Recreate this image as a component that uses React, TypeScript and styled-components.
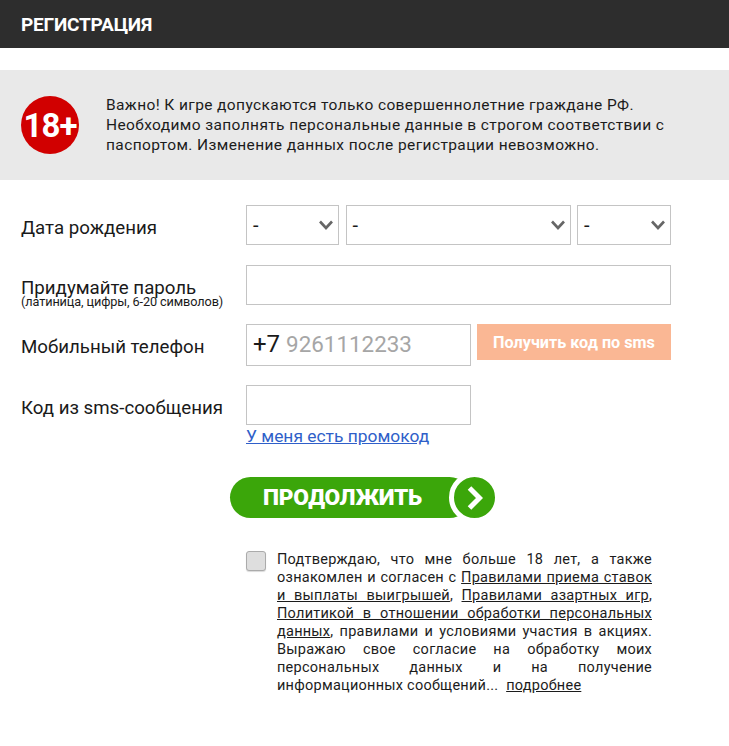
import React from 'react';
import styled, { createGlobalStyle } from 'styled-components';

const GlobalStyle = createGlobalStyle`
  html, body {
    margin: 0;
    padding: 0;
    background: #fff;
    font-family: Roboto, "Liberation Sans", sans-serif;
    color: #1a1a1a;
  }
  * { box-sizing: border-box; }
`;

const Page = styled.div`
  width: 729px;
  height: 746px;
  overflow: hidden;
`;

const Header = styled.header`
  height: 48px;
  background: #2d2d2d;
  display: flex;
  align-items: center;
  padding-left: 21px;
`;

const HeaderTitle = styled.h1`
  margin: 0;
  color: #fff;
  font-size: 19px;
  font-weight: 700;
  letter-spacing: -0.2px;
`;

const Notice = styled.section`
  margin-top: 22px;
  height: 110px;
  background: #e9e9e9;
  display: flex;
  align-items: center;
  padding-left: 21px;
  gap: 27px;
`;

const AgeBadge = styled.div`
  flex: none;
  width: 58px;
  height: 58px;
  border-radius: 50%;
  background: #d10000;
  color: #fff;
  font-size: 33px;
  font-weight: 700;
  letter-spacing: -1px;
  display: flex;
  align-items: center;
  justify-content: center;
`;

const NoticeText = styled.p`
  margin: 0;
  font-size: 15.5px;
  line-height: 20px;
  letter-spacing: 0.39px;
  color: #1c1c1c;
  white-space: nowrap;
`;

const Form = styled.form`
  padding: 25px 58px 0 21px;
  display: flex;
  flex-direction: column;
`;

const Row = styled.div<{ $mt?: number }>`
  display: grid;
  grid-template-columns: 225px 1fr;
  margin-top: ${(p) => p.$mt ?? 0}px;
`;

const Label = styled.div`
  font-size: 18.7px;
  line-height: 21px;
  padding-top: 13px;
  color: #1a1a1a;
`;

const Hint = styled.div`
  font-size: 12.7px;
  line-height: 12px;
  margin-top: -3px;
  letter-spacing: -0.1px;
`;

const Fields = styled.div`
  display: flex;
  gap: 6px;
`;

const DateFields = styled(Fields)`
  width: 425px;
  justify-content: space-between;
  gap: 0;
`;

const SelectBox = styled.div<{ $w: number }>`
  position: relative;
  width: ${(p) => p.$w}px;
  height: 40px;
  border: 1px solid #c4c4c4;
  background: #fff;
  font-size: 20px;
  line-height: 38px;
  padding-left: 6px;
  flex: none;
`;

const Chevron = styled.svg`
  position: absolute;
  right: 4px;
  top: 14px;
`;

const TextBox = styled.div<{ $w: number; $h?: number }>`
  width: ${(p) => p.$w}px;
  height: ${(p) => p.$h ?? 40}px;
  border: 1px solid #c4c4c4;
  background: #fff;
  flex: none;
`;

const PhoneBox = styled(TextBox)`
  display: flex;
  align-items: center;
  padding: 0 0 3px 6px;
  font-size: 24px;
  gap: 6px;
  color: #1a1a1a;
`;

const Placeholder = styled.span`
  font-size: 22.4px;
  color: #a6a6a6;
`;

const SmsButton = styled.button`
  width: 194px;
  height: 36px;
  border: 0;
  padding: 0;
  background: #fab794;
  color: #fff;
  font-family: inherit;
  font-size: 16.2px;
  font-weight: 700;
  opacity: 1;
`;

const CodeColumn = styled.div`
  display: flex;
  flex-direction: column;
`;

const PromoLink = styled.a`
  font-size: 17.4px;
  line-height: 21px;
  margin-top: 1px;
  color: #2f5fc9;
  text-decoration: underline;
`;

const ContinueWrap = styled.div`
  margin-top: 30px;
  margin-left: 209px;
  position: relative;
  width: 265px;
  height: 41px;
`;

const ContinueButton = styled.button`
  width: 240px;
  height: 41px;
  border: 0;
  border-radius: 21px;
  background: #3ba60a;
  color: #fff;
  font-family: inherit;
  font-size: 22.7px;
  font-weight: 900;
  letter-spacing: -0.3px;
  padding: 0 15px 0 0;
  text-align: center;
`;

const ArrowCircle = styled.div`
  position: absolute;
  right: -5px;
  top: -5px;
  width: 51px;
  height: 51px;
  border-radius: 50%;
  background: #3ba60a;
  border: 5px solid #fff;
  display: flex;
  align-items: center;
  justify-content: center;
`;

const Consent = styled.div`
  margin-top: 33px;
  margin-left: 225px;
  display: flex;
  align-items: flex-start;
`;

const CheckBox = styled.div`
  flex: none;
  width: 20px;
  height: 20px;
  margin-right: 11px;
  border: 1px solid #ababab;
  border-radius: 3px;
  background: #dedede;
  box-shadow: 0 1px 1px rgba(0, 0, 0, 0.15);
`;

const ConsentText = styled.p`
  margin: 0;
  width: 375px;
  font-size: 14.5px;
  line-height: 18px;
  letter-spacing: 0.25px;
  text-align: justify;
  color: #1c1c1c;
`;

const ConsentLink = styled.a`
  color: inherit;
  text-decoration: underline;
`;

export default function App() {
  const chevron = (
    <Chevron width="16" height="10" viewBox="0 0 16 10" fill="none">
      <path d="M2 1.5 L8 8 L14 1.5" stroke="#666" strokeWidth="2.6" />
    </Chevron>
  );

  return (
    <Page>
      <GlobalStyle />
      <Header>
        <HeaderTitle>РЕГИСТРАЦИЯ</HeaderTitle>
      </Header>

      <Notice>
        <AgeBadge>18+</AgeBadge>
        <NoticeText>
          Важно! К игре допускаются только совершеннолетние граждане РФ.
          <br />
          Необходимо заполнять персональные данные в строгом соответствии с
          <br />
          паспортом. Изменение данных после регистрации невозможно.
        </NoticeText>
      </Notice>

      <Form>
        <Row>
          <Label>Дата рождения</Label>
          <DateFields>
            <SelectBox $w={93}>-{chevron}</SelectBox>
            <SelectBox $w={225}>-{chevron}</SelectBox>
            <SelectBox $w={94}>-{chevron}</SelectBox>
          </DateFields>
        </Row>

        <Row $mt={20}>
          <Label>
            Придумайте пароль
            <Hint>(латиница, цифры, 6-20 символов)</Hint>
          </Label>
          <TextBox $w={425} />
        </Row>

        <Row $mt={16}>
          <Label>Мобильный телефон</Label>
          <Fields>
            <PhoneBox $w={225} $h={42}>
              +7 <Placeholder>9261112233</Placeholder>
            </PhoneBox>
            <SmsButton type="button">Получить код по sms</SmsButton>
          </Fields>
        </Row>

        <Row $mt={19}>
          <Label>Код из sms-сообщения</Label>
          <CodeColumn>
            <TextBox $w={225} />
            <PromoLink href="#">У меня есть промокод</PromoLink>
          </CodeColumn>
        </Row>

        <ContinueWrap>
          <ContinueButton type="button">ПРОДОЛЖИТЬ</ContinueButton>
          <ArrowCircle>
            <svg width="17" height="24" viewBox="0 0 17 24" fill="none">
              <path d="M3.5 2 L13.5 12 L3.5 22" stroke="#fff" strokeWidth="5" />
            </svg>
          </ArrowCircle>
        </ContinueWrap>

        <Consent>
          <CheckBox />
          <ConsentText>
            Подтверждаю, что мне больше 18 лет, а также ознакомлен и согласен с{' '}
            <ConsentLink href="#">Правилами приема ставок и выплаты выигрышей</ConsentLink>,{' '}
            <ConsentLink href="#">Правилами азартных игр</ConsentLink>,{' '}
            <ConsentLink href="#">Политикой в отношении обработки персональных данных</ConsentLink>,
            правилами и условиями участия в акциях. Выражаю свое согласие на обработку моих
            персональных данных и на получение информационных сообщений...{'\u00a0 '}
            <ConsentLink href="#">подробнее</ConsentLink>
          </ConsentText>
        </Consent>
      </Form>
    </Page>
  );
}
